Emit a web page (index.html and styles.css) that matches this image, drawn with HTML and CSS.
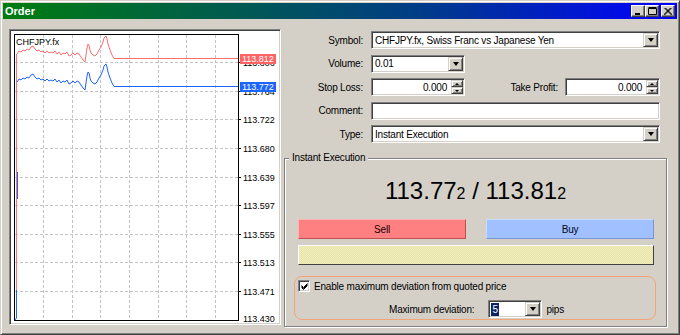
FILE: index.html
```html
<!DOCTYPE html>
<html>
<head>
  <meta charset="utf-8">
  <title>Order</title>
  <link rel="stylesheet" href="styles.css">
</head>
<body>
  <div class="window">
    <div class="titlebar">
      <span class="title">Order</span>
      <div class="caption-buttons">
        <span class="cap-btn"><svg width="8" height="7" viewBox="0 0 8 7"><rect x="1" y="5" width="5" height="2" fill="#000"/></svg></span>
        <span class="cap-btn"><svg width="9" height="8" viewBox="0 0 9 8"><path d="M0.5,1.5 H8.5 V7.5 H0.5 Z M0.5,0.5 H8.5" fill="none" stroke="#000"/></svg></span>
        <span class="cap-btn close"><svg width="8" height="7" viewBox="0 0 8 7"><path d="M0.5,0 L7.5,7 M1.5,0 L8.5,7 M7.5,0 L0.5,7 M6.5,0 L-0.5,7" stroke="#000" stroke-width="1"/></svg></span>
      </div>
    </div>

    <div class="content">
      <div class="chart-frame">
        <svg class="chart" viewBox="11 31 268 292" width="268" height="292">
          <defs>
            <path id="tick" fill="none" d="M17,54 L19,51 L21,52 L23,50 L25,51 L27,49 L29,50 L31,47 L33,46 L35,49 L37,51 L39,50 L41,52 L43,51 L45,53 L47,51 L49,53 L51,52 L53,53 L55,51 L57,54 L59,52 L61,55 L63,53 L65,54 L67,52 L69,56 L71,55 L73,53 L75,55 L77,53 L79,54 L81,57 L83,60 L85,62 L86,55 L87,48 L88,44 L89,45 L90,50 L91,53 L93,55 L95,56 L97,54 L99,50 L101,47 L103,42 L104,38 L106,36 L107,39 L108,44 L110,50 L112,55 L114,58.5 L238,58.5"/>
          </defs>
          <rect x="11" y="31" width="268" height="292" fill="#fff"/>

          <!-- grid -->
          <g stroke="#c4c4c4" stroke-dasharray="3 2">
            <path d="M43.5,35 V320 M72.5,35 V320 M100.5,35 V320 M129.5,35 V320 M158.5,35 V320 M186.5,35 V320 M215.5,35 V320"/>
            <path d="M15,62.5 H238 M15,91.5 H238 M15,119.5 H238 M15,148.5 H238 M15,177.5 H238 M15,205.5 H238 M15,234.5 H238 M15,262.5 H238 M15,291.5 H238"/>
          </g>

          <!-- axis ticks -->
          <path stroke="#000" d="M238,62.5 H241 M238,91.5 H241 M238,119.5 H241 M238,148.5 H241 M238,177.5 H241 M238,205.5 H241 M238,234.5 H241 M238,262.5 H241 M238,291.5 H241"/>

          <!-- price scale -->
          <g class="scale">
            <text x="243" y="66">113.806</text>
            <text x="243" y="94.5">113.764</text>
            <text x="243" y="123">113.722</text>
            <text x="243" y="151.5">113.680</text>
            <text x="243" y="180.5">113.639</text>
            <text x="243" y="209">113.597</text>
            <text x="243" y="237.5">113.555</text>
            <text x="243" y="266">113.513</text>
            <text x="243" y="295">113.471</text>
            <text x="243" y="321.5">113.430</text>
          </g>

          <!-- history compressed at the left edge -->
          <path stroke="#ff7272" d="M16.5,54 V290"/>
          <path stroke="#1c64ff" fill="none" d="M17.5,172 V199 M16.5,290 V318 L15,320"/>

          <!-- ask / bid -->
          <use href="#tick" stroke="#ff6c6c"/>
          <use href="#tick" stroke="#1c64ff" transform="translate(0,28)"/>

          <rect x="14.5" y="34.5" width="224" height="286" fill="none" stroke="#000"/>

          <rect x="240" y="54" width="36" height="10" fill="#ff6464"/>
          <text class="tag" x="242" y="62.4">113.812</text>
          <rect x="240" y="82" width="36" height="10" fill="#1c64ff"/>
          <text class="tag" x="242" y="90.4">113.772</text>

          <text class="symbol" x="16" y="44.5">CHFJPY.fx</text>
        </svg>
      </div>

      <div class="side">
        <div class="form">
          <label>Symbol:</label>
          <div class="combo wide"><span class="value">CHFJPY.fx, Swiss Franc vs Japanese Yen</span><span class="drop"></span></div>

          <label>Volume:</label>
          <div class="combo"><span class="value">0.01</span><span class="drop"></span></div>

          <label>Stop Loss:</label>
          <div class="combo"><span class="value num">0.000</span><span class="spin"><span class="up"></span><span class="down"></span></span></div>
          <label class="tp">Take Profit:</label>
          <div class="combo"><span class="value num">0.000</span><span class="spin"><span class="up"></span><span class="down"></span></span></div>

          <label>Comment:</label>
          <div class="combo wide"><span class="value"></span></div>

          <label>Type:</label>
          <div class="combo wide"><span class="value">Instant Execution</span><span class="drop"></span></div>
        </div>

        <fieldset class="group">
          <legend>Instant Execution</legend>
          <div class="quote">113.77<small>2</small> / 113.81<small>2</small></div>
          <div class="trade">
            <span class="btn sell">Sell</span>
            <span class="btn buy">Buy</span>
          </div>
          <div class="bar"></div>
          <div class="deviation">
            <div class="check-row">
              <span class="checkbox"><svg width="7" height="7" viewBox="0 0 7 7"><path d="M0.5,2.5 L2.5,4.5 L6.5,0.5 M0.5,3.5 L2.5,5.5 L6.5,1.5 M0.5,4.5 L2.5,6.5 L6.5,2.5" fill="none" stroke="#000"/></svg></span>
              <span>Enable maximum deviation from quoted price</span>
            </div>
            <div class="dev-row">
              <label>Maximum deviation:</label>
              <div class="combo small"><span class="value"><span class="sel">5</span></span><span class="drop"></span></div>
              <span class="unit">pips</span>
            </div>
          </div>
        </fieldset>
      </div>
    </div>
  </div>
</body>
</html>
```

FILE: styles.css
```css
/* Base */
body {
  margin: 0;
  font: 10px "Liberation Sans", Arial, sans-serif;
  letter-spacing: -0.2px;
  color: #000;
  background: #d4d0c8;
}

.window {
  box-sizing: border-box;
  width: 680px;
  height: 335px;
  padding: 2px;
  display: flex;
  flex-direction: column;
  overflow: hidden;
  background: #d4d0c8;
  border: 1px solid;
  border-color: #d4d0c8 #404040 #404040 #d4d0c8;
  box-shadow: inset 1px 1px #fff, inset -1px -1px #808080;
}

/* Title bar */
.titlebar {
  height: 16px;
  flex: none;
  display: flex;
  align-items: center;
  justify-content: space-between;
  padding-left: 2px;
  color: #fff;
  background: linear-gradient(to right, #007c10 0%, #005a52 35%, #003c88 62%, #0000ff 100%);
}

.title {
  font-size: 11px;
  font-weight: bold;
  letter-spacing: 0;
}

.caption-buttons {
  display: flex;
  margin-right: 2px;
}

.cap-btn {
  box-sizing: border-box;
  width: 14px;
  height: 12px;
  display: flex;
  align-items: center;
  justify-content: center;
  background: #d4d0c8;
  border: 1px solid;
  border-color: #fff #404040 #404040 #fff;
  box-shadow: inset -1px -1px #808080;
}

.cap-btn svg {
  display: block;
}

.cap-btn.close {
  margin-left: 2px;
}

/* Body of the dialog */
.content {
  flex: 1;
  display: flex;
  gap: 3px;
  padding: 10px 10px 0 6px;
}

.chart-frame {
  box-sizing: border-box;
  width: 272px;
  height: 296px;
  padding: 1px;
  background: #fff;
  border: 1px solid;
  border-color: #808080 #fff #fff #808080;
  box-shadow: inset 1px 1px #404040, inset -1px -1px #d4d0c8;
}

.chart {
  display: block;
}

.chart text {
  font-family: "Liberation Sans", Arial, sans-serif;
  font-size: 9px;
  letter-spacing: 0;
}

.chart .tag {
  fill: #fff;
}

.side {
  width: 383px;
  display: flex;
  flex-direction: column;
}

/* Order form */
.form {
  display: grid;
  grid-template-columns: 85px 94px 100px 95px;
  grid-auto-rows: 18px;
  row-gap: 5.5px;
  margin: 2px 0 0 2px;
}

.form label {
  grid-column: 1;
  align-self: center;
  text-align: right;
  padding-right: 8px;
}

.form label.tp {
  grid-column: 3;
  padding-right: 7px;
}

.wide {
  grid-column: 2 / 5;
}

.combo {
  box-sizing: border-box;
  height: 18px;
  display: flex;
  background: #fff;
  border: 1px solid;
  border-color: #808080 #fff #fff #808080;
  box-shadow: inset 1px 1px #404040, inset -1px -1px #d4d0c8;
}

.value {
  flex: 1;
  display: flex;
  align-items: center;
  padding-left: 3px;
  white-space: nowrap;
  overflow: hidden;
}

.value.num {
  justify-content: flex-end;
  padding-right: 3px;
}

.drop,
.spin span {
  box-sizing: border-box;
  display: flex;
  align-items: center;
  justify-content: center;
  background: #d4d0c8;
  border: 1px solid;
  border-color: #d4d0c8 #404040 #404040 #d4d0c8;
  box-shadow: inset 1px 1px #fff, inset -1px -1px #808080;
}

.drop {
  width: 15px;
  margin: 1px;
}

.drop::after {
  content: "";
  border-left: 3.5px solid transparent;
  border-right: 3.5px solid transparent;
  border-top: 4px solid #000;
}

.spin {
  width: 12px;
  margin: 1px;
  display: flex;
  flex-direction: column;
}

.spin span {
  flex: 1;
}

.spin .up::after,
.spin .down::after {
  content: "";
  border-left: 2px solid transparent;
  border-right: 2px solid transparent;
}

.spin .up::after {
  border-bottom: 2px solid #000;
}

.spin .down::after {
  border-top: 2px solid #000;
}

/* Instant execution group */
.group {
  margin: 9px 0 0;
  padding: 0;
  min-width: 0;
  border: 1px solid #808080;
  box-shadow: inset 1px 1px #fff, 1px 1px #fff;
}

.group legend {
  margin-left: 4px;
  padding: 0 3px;
  line-height: 12px;
  background: #d4d0c8;
}

.quote {
  margin-top: 12.5px;
  text-align: center;
  font-size: 24px;
  line-height: 28px;
  letter-spacing: 0;
}

.quote small {
  font-size: 16px;
}

.trade {
  display: flex;
  gap: 20px;
  margin: 11.5px 12px 0 13px;
}

.btn {
  box-sizing: border-box;
  flex: 1;
  height: 20px;
  display: flex;
  align-items: center;
  justify-content: center;
  border: 1px solid;
}

.sell {
  color: #200000;
  background: #ff8080;
  border-color: #ffb4b4 #c44c4c #c44c4c #ffb4b4;
}

.buy {
  color: #000820;
  background: #a0c0ff;
  border-color: #c8dcff #7494d4 #7494d4 #c8dcff;
}

.bar {
  box-sizing: border-box;
  height: 20px;
  margin: 6px 12px 0 13px;
  border: 1px solid;
  border-color: #fff #404040 #404040 #fff;
  background: repeating-conic-gradient(#f2eebe 0 25%, #e6e2a8 0 50%) 0 0 / 2px 2px;
}

.deviation {
  box-sizing: border-box;
  height: 44px;
  margin: 11px 10px 6px 9px;
  padding: 3px 0 0 3px;
  border: 1px solid #f4a474;
  border-radius: 8px;
}

.check-row {
  display: flex;
  align-items: center;
  gap: 4px;
  height: 12px;
}

.checkbox {
  box-sizing: border-box;
  width: 12px;
  height: 12px;
  display: flex;
  align-items: center;
  justify-content: center;
  background: #fff;
  border: 1px solid;
  border-color: #808080 #fff #fff #808080;
  box-shadow: inset 1px 1px #404040, inset -1px -1px #d4d0c8;
}

.dev-row {
  display: flex;
  align-items: center;
  justify-content: center;
  margin-top: 8px;
}

.dev-row label {
  margin-right: 14px;
}

.combo.small {
  width: 54px;
}

.combo.small .value {
  padding-left: 2px;
}

.sel {
  padding: 1px 1px;
  color: #fff;
  background: #0a246a;
}

.unit {
  margin-left: 4px;
}
```
